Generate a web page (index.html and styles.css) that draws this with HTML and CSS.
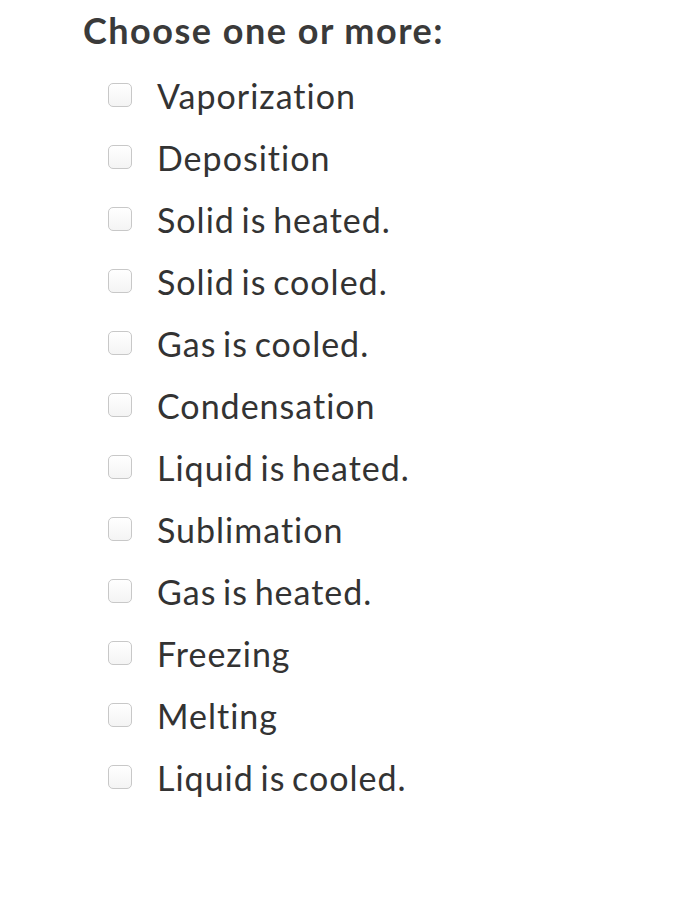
FILE: index.html
```html
<!DOCTYPE html>
<html>
<head>
<meta charset="utf-8">
<link rel="stylesheet" href="styles.css">
</head>
<body>
<div class="question">
  <div class="prompt">Choose one or more:</div>
  <ul class="options">
    <li class="option"><span class="box"></span><span class="label">Vaporization</span></li>
    <li class="option"><span class="box"></span><span class="label">Deposition</span></li>
    <li class="option"><span class="box"></span><span class="label">Solid is heated.</span></li>
    <li class="option"><span class="box"></span><span class="label">Solid is cooled.</span></li>
    <li class="option"><span class="box"></span><span class="label">Gas is cooled.</span></li>
    <li class="option"><span class="box"></span><span class="label">Condensation</span></li>
    <li class="option"><span class="box"></span><span class="label">Liquid is heated.</span></li>
    <li class="option"><span class="box"></span><span class="label">Sublimation</span></li>
    <li class="option"><span class="box"></span><span class="label">Gas is heated.</span></li>
    <li class="option"><span class="box"></span><span class="label">Freezing</span></li>
    <li class="option"><span class="box"></span><span class="label">Melting</span></li>
    <li class="option"><span class="box"></span><span class="label">Liquid is cooled.</span></li>
  </ul>
</div>
</body>
</html>
```
FILE: styles.css
```css
html, body {
  margin: 0;
  padding: 0;
  background: #fff;
}
body {
  font-family: Lato, "Open Sans", sans-serif;
  color: #333;
  font-variant-ligatures: none;
}
.question {
  padding: 8px 0 0 83px;
}
.prompt {
  font-weight: 700;
  font-size: 36px;
  line-height: 44px;
  letter-spacing: 1.5px;
  color: #3a3a3a;
}
.options {
  list-style: none;
  margin: 12px 0 0 0;
  padding: 0 0 0 25px;
}
.option {
  display: flex;
  align-items: center;
  height: 62px;
}
.box {
  width: 22px;
  height: 22px;
  border: 1px solid #c8c8c8;
  border-radius: 5px;
  background: linear-gradient(#fff, #f4f4f4);
  box-sizing: content-box;
  flex: none;
}
.label {
  margin-left: 25px;
  font-size: 34px;
  letter-spacing: 1px;
  word-spacing: -3px;
  color: #333;
}
```
